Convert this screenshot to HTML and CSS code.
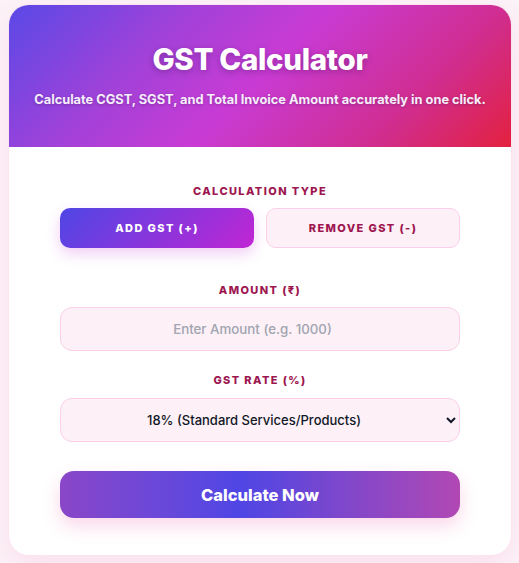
FILE: index.html
```html
<!DOCTYPE html>
<html lang="en">
<head>
<meta charset="utf-8">
<title>GST Calculator</title>
<link rel="stylesheet" href="styles.css">
</head>
<body>
<div class="card">
  <header class="hero">
    <h1 class="title">GST Calculator</h1>
    <p class="subtitle">Calculate CGST, SGST, and Total Invoice Amount accurately in one click.</p>
  </header>
  <form class="form">
    <div class="group group-type">
      <label class="label">Calculation Type</label>
      <div class="toggle">
        <button type="button" class="tbtn tbtn-active">Add GST (+)</button>
        <button type="button" class="tbtn">Remove GST (-)</button>
      </div>
    </div>
    <div class="group group-amount">
      <label class="label" for="amount">Amount (₹)</label>
      <input id="amount" class="field" type="number" placeholder="Enter Amount (e.g. 1000)">
    </div>
    <div class="group group-rate">
      <label class="label" for="rate">GST Rate (%)</label>
      <select id="rate" class="field select">
        <option>18% (Standard Services/Products)</option>
        <option>5%</option>
        <option>12%</option>
        <option>28%</option>
      </select>
    </div>
    <button type="button" class="calc">Calculate Now</button>
  </form>
</div>
</body>
</html>
```

FILE: styles.css
```css
* { box-sizing: border-box; }
html, body { margin: 0; padding: 0; }
body {
  background: #fcf3f8;
  font-family: Inter, "Noto Sans", sans-serif;
  padding: 5px 8px 8px 9px;
}
.card {
  width: 502px;
  background: #ffffff;
  border-radius: 20px;
  overflow: hidden;
  box-shadow: 0 0 0 1px #fbe3ef, 0 10px 30px rgba(236, 72, 153, 0.12);
}
.hero {
  height: 142px;
  padding-top: 36px;
  text-align: center;
  color: #ffffff;
  background: linear-gradient(135deg, #5a49e6 0%, #a441d8 30%, #c83bd4 50%, #d02d8f 78%, #e3213f 100%);
}
.title {
  margin: 0;
  font-size: 29.5px;
  font-weight: 800;
  line-height: 36px;
  letter-spacing: -0.3px;
  text-shadow: 0 2px 6px rgba(60, 20, 80, 0.35);
}
.subtitle {
  margin: 14px 0 0;
  font-size: 12.8px;
  font-weight: 700;
  line-height: 18px;
  color: #f6eefb;
  text-shadow: 0 1px 3px rgba(60, 20, 80, 0.35);
}
.form {
  padding: 36px 51px 37px;
}
.group { text-align: center; }
.group-type { margin-bottom: 34px; }
.group-amount { margin-bottom: 21px; }
.group-rate { margin-bottom: 29px; }
.label {
  display: block;
  font-size: 11px;
  line-height: 16px;
  font-weight: 800;
  letter-spacing: 1.4px;
  text-transform: uppercase;
  color: #9d1650;
  margin-bottom: 9px;
}
.group-rate .label { margin-bottom: 10px; }
.toggle {
  display: grid;
  grid-template-columns: 1fr 1fr;
  gap: 12px;
}
.tbtn {
  height: 40px;
  border-radius: 10px;
  border: 1px solid #fbcfe8;
  background: #fdf0f7;
  color: #9d1650;
  font-family: Inter, "Noto Sans", sans-serif;
  font-size: 11px;
  font-weight: 800;
  letter-spacing: 1.4px;
  text-transform: uppercase;
  cursor: pointer;
}
.tbtn-active {
  border: none;
  color: #ffffff;
  background: linear-gradient(135deg, #4f46e5 0%, #c026d3 100%);
  box-shadow: 0 6px 14px rgba(192, 38, 211, 0.22);
}
.field {
  display: block;
  width: 100%;
  height: 44px;
  border-radius: 12px;
  border: 1px solid #fbcfe8;
  background: #fdf0f7;
  font-family: Inter, "Noto Sans", sans-serif;
  font-size: 13.3px;
  font-weight: 500;
  text-align: center;
  color: #111827;
  outline: none;
}
.field::placeholder { color: #a0a5b0; }
.select {
  font-size: 13px;
  text-align-last: center;
  padding: 0 10px;
}
.calc {
  display: block;
  width: 100%;
  height: 47px;
  border: none;
  border-radius: 14px;
  background: linear-gradient(90deg, #8a46c8 0%, #6a48d9 25%, #4f46e5 45%, #7d47cc 70%, #b148b4 100%);
  color: #ffffff;
  font-family: Inter, "Noto Sans", sans-serif;
  font-size: 16.5px;
  font-weight: 800;
  box-shadow: 0 8px 18px rgba(236, 72, 153, 0.22);
  cursor: pointer;
}
```
